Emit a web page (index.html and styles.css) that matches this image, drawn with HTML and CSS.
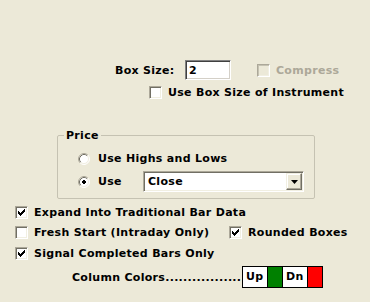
FILE: index.html
```html
<!DOCTYPE html>
<html>
<head>
<meta charset="utf-8">
<title>Box Settings</title>
<link rel="stylesheet" href="styles.css">
</head>
<body>
<div class="dlg">
  <div class="row-box">
    <span class="lbl-box">Box Size:</span>
    <span class="edit">2</span>
    <label class="chk disabled compress"><span class="cb"></span><span>Compress</span></label>
  </div>
  <label class="chk r-inst"><span class="cb"></span><span>Use Box Size of Instrument</span></label>

  <fieldset class="grp">
    <legend>Price</legend>
    <div class="rr rr1">
      <span class="rb"><svg width="12" height="12" viewBox="0 0 12 12"><circle cx="6" cy="6" r="5" fill="#fff"/><path d="M2.11 9.89A5.5 5.5 0 0 1 9.89 2.11" fill="none" stroke="#ACA899"/><path d="M9.89 2.11A5.5 5.5 0 0 1 2.11 9.89" fill="none" stroke="#fff"/><path d="M2.82 9.18A4.5 4.5 0 0 1 9.18 2.82" fill="none" stroke="#716F64"/><path d="M9.18 2.82A4.5 4.5 0 0 1 2.82 9.18" fill="none" stroke="#F1EFE2"/></svg></span>
      <span>Use Highs and Lows</span>
    </div>
    <div class="rr rr2">
      <span class="rb"><svg width="12" height="12" viewBox="0 0 12 12"><circle cx="6" cy="6" r="5" fill="#fff"/><path d="M2.11 9.89A5.5 5.5 0 0 1 9.89 2.11" fill="none" stroke="#ACA899"/><path d="M9.89 2.11A5.5 5.5 0 0 1 2.11 9.89" fill="none" stroke="#fff"/><path d="M2.82 9.18A4.5 4.5 0 0 1 9.18 2.82" fill="none" stroke="#716F64"/><path d="M9.18 2.82A4.5 4.5 0 0 1 2.82 9.18" fill="none" stroke="#F1EFE2"/><path d="M5 4h2v1h1v2h-1v1h-2v-1h-1v-2h1z" fill="#000" shape-rendering="crispEdges"/></svg></span>
      <span class="use">Use</span>
      <div class="combo">
        <span class="combo-val">Close</span>
        <span class="combo-btn"><svg width="7" height="4" viewBox="0 0 7 4"><path d="M0 0h7l-3.5 4z" fill="#000"/></svg></span>
      </div>
    </div>
  </fieldset>

  <div class="opts">
    <label class="chk opt-expand"><span class="cb"><svg class="mark" width="7" height="7" viewBox="0 0 7 7"><path d="M0 2h1v3h-1zM1 3h1v3h-1zM2 4h1v3h-1zM3 3h1v3h-1zM4 2h1v3h-1zM5 1h1v3h-1zM6 0h1v3h-1z" fill="#000" shape-rendering="crispEdges"/></svg></span><span>Expand Into Traditional Bar Data</span></label>
    <div class="opt-fresh">
      <label class="chk fresh"><span class="cb"></span><span>Fresh Start (Intraday Only)</span></label>
      <label class="chk"><span class="cb"><svg class="mark" width="7" height="7" viewBox="0 0 7 7"><path d="M0 2h1v3h-1zM1 3h1v3h-1zM2 4h1v3h-1zM3 3h1v3h-1zM4 2h1v3h-1zM5 1h1v3h-1zM6 0h1v3h-1z" fill="#000" shape-rendering="crispEdges"/></svg></span><span>Rounded Boxes</span></label>
    </div>
    <label class="chk opt-signal"><span class="cb"><svg class="mark" width="7" height="7" viewBox="0 0 7 7"><path d="M0 2h1v3h-1zM1 3h1v3h-1zM2 4h1v3h-1zM3 3h1v3h-1zM4 2h1v3h-1zM5 1h1v3h-1zM6 0h1v3h-1z" fill="#000" shape-rendering="crispEdges"/></svg></span><span>Signal Completed Bars Only</span></label>
  </div>

  <div class="colors">
    <span class="colors-lbl">Column Colors.................</span>
    <div class="swatches">
      <span class="sw sw-txt">Up</span>
      <span class="sw sw-up"></span>
      <span class="sw sw-txt">Dn</span>
      <span class="sw sw-dn"></span>
    </div>
  </div>
</div>
</body>
</html>
```

FILE: styles.css
```css
* { box-sizing: border-box; }
html, body { margin: 0; padding: 0; }
body {
  width: 370px;
  height: 302px;
  overflow: hidden;
  background: #ECE9D8;
  color: #000;
  font: bold 11px/13px "DejaVu Sans", sans-serif;
  letter-spacing: 0.3px;
}
.dlg { padding-top: 60px; }

.row-box {
  display: flex;
  align-items: center;
  height: 20px;
  padding-left: 115px;
}
.lbl-box { width: 70px; }
.edit {
  width: 46px;
  height: 20px;
  background: #fff;
  border: 1px solid;
  border-color: #808080 #fff #fff #808080;
  box-shadow: inset 1px 1px #404040, inset -1px -1px #D4D0C8;
  padding: 3px 0 0 3px;
  line-height: 13px;
}
.compress { margin-left: 26px; }

.chk {
  display: flex;
  align-items: center;
  gap: 6px;
  height: 13px;
}
.cb {
  flex: none;
  width: 13px;
  height: 13px;
  background: #fff;
  border: 1px solid;
  border-color: #ACA899 #fff #fff #ACA899;
  box-shadow: inset 1px 1px #716F64, inset -1px -1px #F1EFE2;
  display: flex;
  align-items: center;
  justify-content: center;
}
.mark { display: block; }
.disabled { color: #ACA899; }
.disabled .cb {
  background: #ECE9D8;
  box-shadow: inset 1px 1px #C5C2B2, inset -1px -1px #F1EFE2;
}
.r-inst { margin: 6px 0 0 149px; }

.grp {
  margin: 30px 0 0 57px;
  width: 258px;
  padding: 0 0 6px 20px;
  border: 1px solid #C5C2B2;
  border-radius: 2px;
  min-width: 0;
}
.grp legend {
  margin-left: -14px;
  padding: 0 2px;
  line-height: 13px;
}
.rr {
  display: flex;
  align-items: center;
}
.rr1 { height: 13px; margin-top: 10px; }
.rr2 { height: 21px; margin-top: 6px; }
.rb { flex: none; width: 12px; height: 12px; margin-right: 8px; }
.rb svg { display: block; }
.use { width: 45px; }
.combo {
  width: 161px;
  height: 21px;
  background: #fff;
  border: 1px solid;
  border-color: #ACA899 #fff #fff #ACA899;
  box-shadow: inset 1px 1px #716F64, inset -1px -1px #F1EFE2;
  padding: 1px;
  display: flex;
  align-items: stretch;
}
.combo-val {
  flex: 1;
  padding-left: 3px;
  line-height: 17px;
}
.combo-btn {
  width: 16px;
  background: #ECE9D8;
  border: 1px solid;
  border-color: #F1EFE2 #716F64 #716F64 #F1EFE2;
  box-shadow: inset -1px -1px #ACA899, inset 1px 1px #fff;
  display: flex;
  align-items: center;
  justify-content: center;
}
.combo-btn svg { display: block; }

.opts { padding-left: 15px; }
.opt-expand { margin-top: 7px; }
.opt-fresh {
  display: flex;
  margin-top: 7px;
}
.fresh { width: 214px; }
.opt-signal { margin-top: 8px; }

.colors {
  display: flex;
  align-items: center;
  height: 22px;
  margin-top: 6px;
  padding-left: 72px;
}
.colors-lbl {
  width: 170px;
  white-space: nowrap;
}
.swatches {
  display: flex;
  height: 22px;
  border: 1px solid #000;
}
.sw { display: block; }
.sw + .sw { border-left: 1px solid #000; }
.sw-txt {
  width: 25px;
  background: #fff;
  padding-left: 3px;
  line-height: 20px;
}
.sw-txt:first-child { width: 24px; }
.sw-up { width: 15px; background: #008000; }
.sw-dn { width: 15px; background: #FF0000; }
```
